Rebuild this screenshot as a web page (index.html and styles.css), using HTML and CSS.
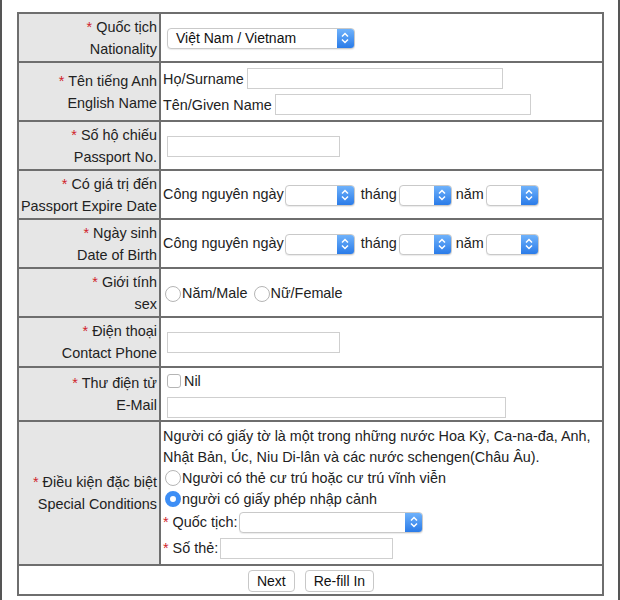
FILE: index.html
```html
<!DOCTYPE html>
<html>
<head>
<meta charset="utf-8">
<link rel="stylesheet" href="styles.css">
</head>
<body>
<div class="page">
<table class="form">
  <tr class="r1">
    <th><span class="req">*</span> Quốc tịch<br>Nationality</th>
    <td><span class="sel w-nat"><span class="val">Việt Nam / Vietnam</span><span class="arr"><svg width="10" height="14" viewBox="0 0 10 14"><path d="M2 5.5 5 2.5 8 5.5M2 8.5 5 11.5 8 8.5" fill="none" stroke="#fff" stroke-width="1.5"/></svg></span></span></td>
  </tr>
  <tr class="r2">
    <th><span class="req">*</span> Tên tiếng Anh<br>English Name</th>
    <td class="stack">
      <div class="line">Họ/Surname <span class="inp w-sur"></span></div>
      <div class="line">Tên/Given Name <span class="inp w-sur"></span></div>
    </td>
  </tr>
  <tr class="r3">
    <th><span class="req">*</span> Số hộ chiếu<br>Passport No.</th>
    <td><span class="inp w-pass"></span></td>
  </tr>
  <tr class="r4">
    <th><span class="req">*</span> Có giá trị đến<br>Passport Expire Date</th>
    <td class="dates">Công nguyên ngày<span class="sel w-day"><span class="val"></span><span class="arr"><svg width="10" height="14" viewBox="0 0 10 14"><path d="M2 5.5 5 2.5 8 5.5M2 8.5 5 11.5 8 8.5" fill="none" stroke="#fff" stroke-width="1.5"/></svg></span></span><span class="dl">tháng</span><span class="sel w-mon"><span class="val"></span><span class="arr"><svg width="10" height="14" viewBox="0 0 10 14"><path d="M2 5.5 5 2.5 8 5.5M2 8.5 5 11.5 8 8.5" fill="none" stroke="#fff" stroke-width="1.5"/></svg></span></span><span class="dl">năm</span><span class="sel w-mon"><span class="val"></span><span class="arr"><svg width="10" height="14" viewBox="0 0 10 14"><path d="M2 5.5 5 2.5 8 5.5M2 8.5 5 11.5 8 8.5" fill="none" stroke="#fff" stroke-width="1.5"/></svg></span></span></td>
  </tr>
  <tr class="r5">
    <th><span class="req">*</span> Ngày sinh<br>Date of Birth</th>
    <td class="dates">Công nguyên ngày<span class="sel w-day"><span class="val"></span><span class="arr"><svg width="10" height="14" viewBox="0 0 10 14"><path d="M2 5.5 5 2.5 8 5.5M2 8.5 5 11.5 8 8.5" fill="none" stroke="#fff" stroke-width="1.5"/></svg></span></span><span class="dl">tháng</span><span class="sel w-mon"><span class="val"></span><span class="arr"><svg width="10" height="14" viewBox="0 0 10 14"><path d="M2 5.5 5 2.5 8 5.5M2 8.5 5 11.5 8 8.5" fill="none" stroke="#fff" stroke-width="1.5"/></svg></span></span><span class="dl">năm</span><span class="sel w-mon"><span class="val"></span><span class="arr"><svg width="10" height="14" viewBox="0 0 10 14"><path d="M2 5.5 5 2.5 8 5.5M2 8.5 5 11.5 8 8.5" fill="none" stroke="#fff" stroke-width="1.5"/></svg></span></span></td>
  </tr>
  <tr class="r6">
    <th><span class="req">*</span> Giới tính<br>sex</th>
    <td><span class="radio"></span>Năm/Male <span class="radio"></span>Nữ/Female</td>
  </tr>
  <tr class="r7">
    <th><span class="req">*</span> Điện thoại<br>Contact Phone</th>
    <td><span class="inp w-pass"></span></td>
  </tr>
  <tr class="r8">
    <th><span class="req">*</span> Thư điện tử<br>E-Mail</th>
    <td class="stack">
      <div class="line"><span class="check"></span>Nil</div>
      <div class="line"><span class="inp w-mail"></span></div>
    </td>
  </tr>
  <tr class="r9">
    <th><span class="req">*</span> Điều kiện đặc biệt<br>Special Conditions</th>
    <td class="special">
      <div class="line">Người có giấy tờ là một trong những nước Hoa Kỳ, Ca-na-đa, Anh,</div>
      <div class="line">Nhật Bản, Úc, Niu Di-lân và các nước schengen(Châu Âu).</div>
      <div class="line"><span class="radio"></span>Người có thẻ cư trú hoặc cư trú vĩnh viễn</div>
      <div class="line"><span class="radio on"></span>người có giấy phép nhập cảnh</div>
      <div class="line tall"><span class="req">*</span>&nbsp;Quốc tịch:<span class="sel w-sq"><span class="val"></span><span class="arr"><svg width="10" height="14" viewBox="0 0 10 14"><path d="M2 5.5 5 2.5 8 5.5M2 8.5 5 11.5 8 8.5" fill="none" stroke="#fff" stroke-width="1.5"/></svg></span></span></div>
      <div class="line tall"><span class="req">*</span>&nbsp;Số thẻ:<span class="inp w-pass"></span></div>
    </td>
  </tr>
  <tr class="r10">
    <td colspan="2" class="btns"><span class="btn">Next</span><span class="btn">Re-fill In</span></td>
  </tr>
</table>
</div>
</body>
</html>
```

FILE: styles.css
```css
html, body {
  margin: 0;
  padding: 0;
  background: #fff;
}
body {
  font-family: "Liberation Sans", Arial, sans-serif;
  font-size: 14.4px;
  color: #222;
}
.page {
  width: 620px;
  height: 600px;
  border-left: 2px solid #555;
  border-right: 2px solid #555;
  padding: 12px 0 0 15px;
  box-sizing: border-box;
}
.form {
  border-collapse: collapse;
  width: 587px;
  border: 2px solid #6e6e6e;
}
.form th, .form td {
  border: 2px solid #6e6e6e;
  line-height: 22px;
  vertical-align: middle;
  padding: 0 1px 0 2px;
}
.form th {
  background: #e6e6e6;
  font-weight: normal;
  text-align: right;
  width: 135px;
  white-space: nowrap;
  padding-right: 2px;
}
.req { color: #d0232a; }
.r1 { height: 49px; }
.r2 { height: 59px; }
.r3, .r4, .r5, .r6 { height: 49px; }
.r7 { height: 50px; }
.r8 { height: 51px; }
.r9 { height: 144px; }
.r10 { height: 30px; }

.line { display: flex; align-items: center; white-space: nowrap; }
.stack .line { height: 26px; }

.sel {
  display: inline-flex;
  vertical-align: middle;
  height: 21px;
  box-sizing: border-box;
  border: 1px solid #c9c9c9;
  border-radius: 4px;
  background: #fff;
  overflow: hidden;
  box-shadow: 0 1px 1px rgba(0,0,0,0.08);
}
.sel .val {
  flex: 1;
  padding-left: 8px;
  font-size: 14px;
  line-height: 19px;
  color: #111;
}
.sel .arr {
  width: 17px;
  background: linear-gradient(#6fb2fb, #2a7be8);
  display: flex;
  align-items: center;
  justify-content: center;
}
.w-nat { width: 188px; margin: 0 0 0 4px; }
.w-day { width: 70px; margin: 0 6px 0 1px; }
.w-mon { width: 53px; margin: 0 4px 0 2px; }
.w-sq { width: 184px; margin-left: 2px; }

.inp {
  display: inline-block;
  vertical-align: middle;
  height: 21px;
  box-sizing: border-box;
  border: 1px solid #cfcfcf;
  background: #fff;
  margin-left: 3px;
}
.w-sur { width: 256px; }
.w-pass { width: 173px; }
.w-mail { width: 339px; margin-left: 4px; }
td > .w-pass { margin-left: 4px; }
.special .w-pass { margin-left: 2px; }

.radio {
  display: inline-block;
  vertical-align: middle;
  width: 16px;
  height: 16px;
  box-sizing: border-box;
  border: 1px solid #b5b5b5;
  border-radius: 50%;
  background: #fff;
  margin: 0 1px 0 2px;
}
.radio.on {
  border: 5px solid #3d8ef5;
  background: #fff;
}
.check {
  display: inline-block;
  width: 14px;
  height: 14px;
  box-sizing: border-box;
  border: 1px solid #b5b5b5;
  border-radius: 3px;
  background: #fff;
  margin: 0 3px 0 4px;
}
.special { padding-top: 0; padding-bottom: 4px; }
.special .line { height: 21px; }
.special .line.tall { height: 26px; }

.btns { text-align: center; }
.btn {
  display: inline-block;
  vertical-align: middle;
  height: 22px;
  line-height: 20px;
  box-sizing: border-box;
  padding: 0 8px;
  border: 1px solid #c8c8c8;
  border-radius: 4px;
  background: #fff;
  margin: 0 5px;
  font-size: 14px;
  color: #111;
}
```
